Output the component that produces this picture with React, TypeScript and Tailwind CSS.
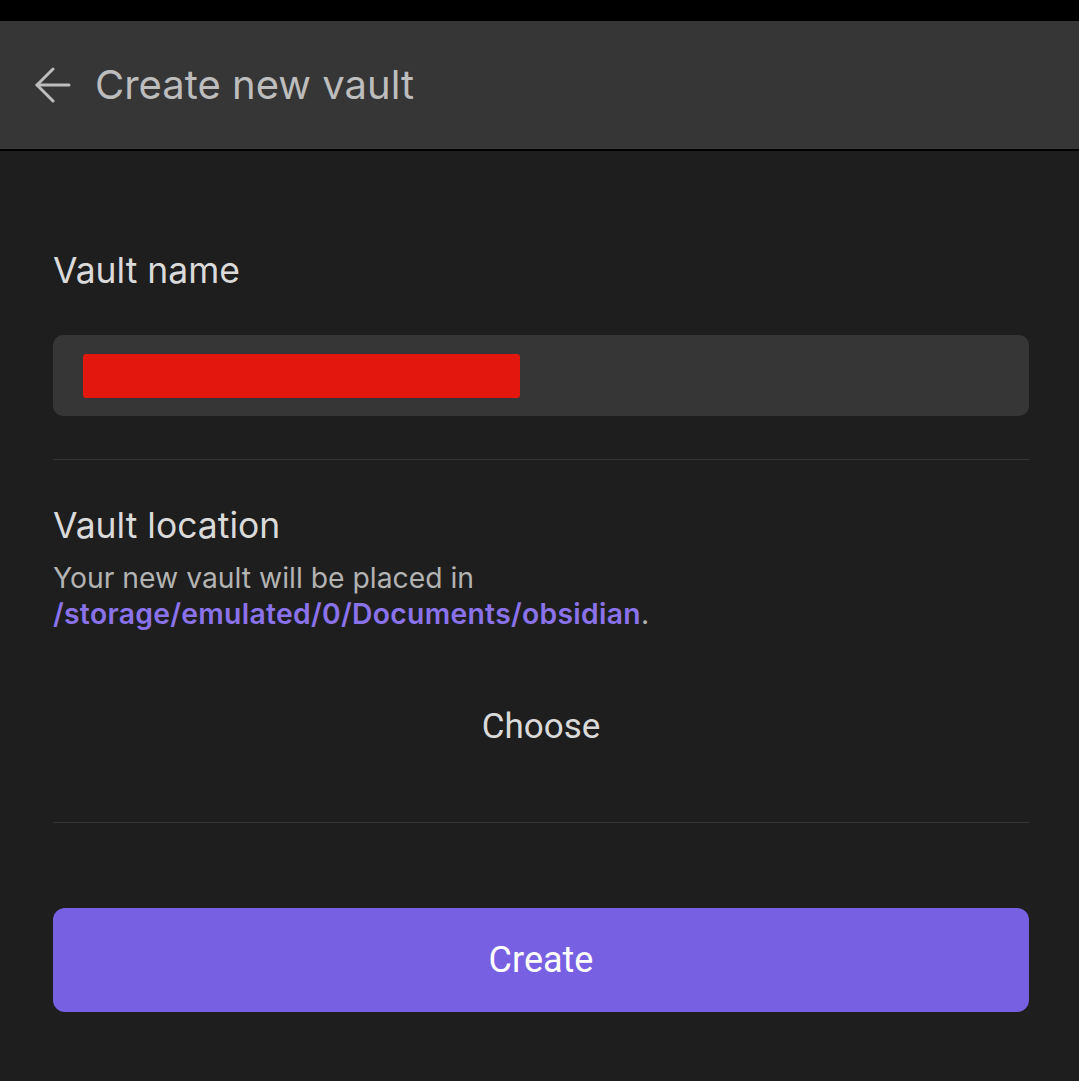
import React from "react";

export default function App() {
  return (
    <div className="w-[1079px] h-[1081px] bg-[#1e1e1e] flex flex-col overflow-hidden" style={{ fontFamily: "Inter, 'Noto Sans', sans-serif" }}>
      <div className="h-[21px] bg-black shrink-0" />
      <div className="h-[130px] bg-[#363636] border-b-2 border-black flex items-center pl-[35px] shrink-0">
        <svg width="36" height="36" viewBox="0 0 36 36" fill="none" stroke="#bdbdbd" strokeWidth="3" strokeLinecap="round" strokeLinejoin="round">
          <path d="M34 18H2" />
          <path d="M18 2L2 18l16 16" />
        </svg>
        <span className="ml-[24px] text-[40px] text-[#bdbdbd] leading-none">Create new vault</span>
      </div>
      <div className="pl-[53px] pr-[50px] flex flex-col">
        <div className="pt-[100px] text-[35.5px] text-[#dadada] leading-[40px]">Vault name</div>
        <div className="mt-[44px] h-[81px] rounded-[10px] bg-[#363636] flex items-center px-[30px]">
          <div className="w-[437px] h-[44px] bg-[#e3170e] rounded-[3px]" />
        </div>
        <div className="mt-[43px] h-px bg-[#333333]" />
        <div className="pt-[46px] text-[35.5px] text-[#dadada] leading-[40px]">Vault location</div>
        <div className="mt-[14px] text-[28.3px] leading-[36px] text-[#b3b3b3]">
          Your new vault will be placed in
          <br />
          <span className="text-[#8a72ea] font-semibold tracking-[0.3px]">/storage/emulated/0/Documents/obsidian</span>.
        </div>
        <div className="mt-[75px] text-center text-[35px] text-[#dadada] leading-[40px]" style={{ fontFamily: "Roboto, sans-serif" }}>Choose</div>
        <div className="mt-[75px] h-px bg-[#333333]" />
        <div className="mt-[85px] h-[104px] rounded-[12px] bg-[#7860e3] flex items-center justify-center text-white text-[36px]" style={{ fontFamily: "Roboto, sans-serif" }}>Create</div>
      </div>
    </div>
  );
}
